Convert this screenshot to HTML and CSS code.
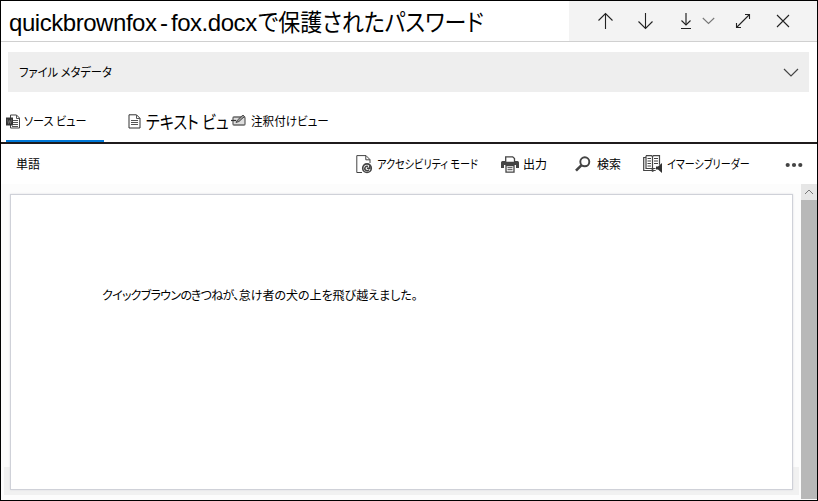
FILE: index.html
```html
<!DOCTYPE html>
<html lang="ja">
<head>
<meta charset="utf-8">
<title>quickbrownfox - fox.docx</title>
<link rel="stylesheet" href="styles.css">
</head>
<body>
<div class="window">
  <header class="header">
    <h1 class="title"><span class="title-latin">quickbrownfox - fox.docx</span><span class="title-ja">で保護されたパスワード</span></h1>
    <div class="actions">
      <svg class="act-up" width="16" height="18" viewBox="0 0 16 18"><path d="M8.500 17V1.500M1.500 8.500l7-7 7 7"/></svg>
      <svg class="act-down" width="16" height="18" viewBox="0 0 16 18"><path d="M8.500 1v15.500M1.500 9.500l7 7 7-7"/></svg>
      <svg class="act-save" width="12" height="18" viewBox="0 0 12 18"><path class="shaft" d="M6 1v12"/><path d="M1.500 8.500L6 13l4.500-4.500M1 16.500h10"/></svg>
      <svg class="act-more" width="13" height="8" viewBox="0 0 13 8"><path d="M.8 1l5.700 5.500L12.200 1"/></svg>
      <svg class="act-expand" width="16" height="16" viewBox="0 0 16 16"><path d="M1.500 14.500l13-13M10 1.500h4.500v4.500M1.500 10v4.500h4.500"/></svg>
      <svg class="act-close" width="14" height="14" viewBox="0 0 14 14"><path d="M1 1l12 12M13 1L1 13"/></svg>
    </div>
  </header>
  <section class="metadata">
    <span class="fit metadata-label">ファイル メタデータ</span>
    <svg width="16" height="10" viewBox="0 0 16 10"><path d="M1 1l7 7 7-7"/></svg>
  </section>
  <nav class="tabs">
    <div class="tab tab-source">
      <svg width="15" height="15" viewBox="0 0 15 15"><path fill="#fff" stroke="#444" d="M4.500 1h6l3 3v10h-9z"/><path fill="none" stroke="#555" d="M10.500 1v3.500h3M6 6.500h6M6 8.500h6M6 10.500h6M6 12.500h6"/><path fill="#333" d="M0 3.500h7v8H0z"/><path fill="none" stroke="#888" stroke-width=".6" d="M1.500 5.500l1 4 1-3 1 3 1-4"/></svg>
      <span class="fit">ソース ビュー</span>
    </div>
    <div class="tab tab-text">
      <svg width="13" height="15" viewBox="0 0 13 15"><path fill="none" stroke="#333" d="M1 .8h7.500l3.500 3.500v9.700H1z"/><path fill="none" stroke="#555" d="M8.500 1v3.500H12M3 6.500h7M3 8.500h7M3 10.500h7"/></svg>
      <span class="fit">テキスト ビュ</span>
    </div>
    <div class="tab tab-annotate">
      <svg width="16" height="13" viewBox="0 0 16 13"><rect x="2" y="2" width="12" height="8" rx="1" fill="#ddd" stroke="#666" stroke-width="1.300"/><path fill="none" stroke="#333" stroke-width="1.200" d="M0 5.500h5"/><path fill="#999" stroke="#333" stroke-width=".8" d="M5 7.500l1.500-2.500L12 0l1.500 1.500-5.500 5z"/></svg>
      <span class="fit">注釈付けビュー</span>
    </div>
  </nav>
  <div class="toolbar">
    <span class="app-name">単語</span>
    <div class="tool tool-access">
      <svg width="17" height="19" viewBox="0 0 17 19"><path fill="none" stroke="#444" d="M6 17.500H.8V.6H10l4 4V8M9.800.6v4.200H14"/><circle cx="11" cy="13.200" r="4.300" fill="#eee" stroke="#444" stroke-width="1.600"/><path fill="none" stroke="#444" stroke-width="1.500" d="M13 14.500a2.200 2.200 0 1 1-1-3M11 13.300h2.800v-3"/></svg>
      <span class="fit">アクセシビリティ モード</span>
    </div>
    <div class="tool tool-print">
      <svg width="18" height="17" viewBox="0 0 18 17"><path fill="#444" d="M1.500 5h15a1.500 1.500 0 0 1 1.500 1.500V12h-3V9H3v3H0V6.500A1.500 1.500 0 0 1 1.500 5z"/><path fill="#fff" stroke="#444" stroke-width="1.300" d="M4.700 6.500V.8h7l1.800 1.800v3.900zM5 9.700h8v6.500H5z"/><path stroke="#444" d="M6.500 11.700h5M6.500 13.700h5"/></svg>
      <span>出力</span>
    </div>
    <div class="tool tool-search">
      <svg width="16" height="16" viewBox="0 0 16 16"><circle cx="9.800" cy="5.800" r="4.500" fill="none" stroke="#444" stroke-width="1.900"/><path stroke="#444" stroke-width="2.600" d="M6.300 9.300L1 14.700"/></svg>
      <span>検索</span>
    </div>
    <div class="tool tool-reader">
      <svg width="20" height="19" viewBox="0 0 20 19"><path fill="none" stroke="#444" stroke-width="1.200" d="M9.500 1.500v14M3 .7h5.500l1 .8 1-.8h6v9M3 .7v12.800h5.500l1 1 1-1h2M3 2.500H.7v13h8l1 .8 1-.8h2"/><path stroke="#444" d="M4.500 3.500H8M4.500 6H8M4.500 8.500H8M4.500 11H8M11 3.500h4M11 6h4M11 8.500h4"/><path fill="#333" d="M13 11.500h2l4-3.500v10l-4-3.500h-2z"/></svg>
      <span class="fit">イマーシブリーダー</span>
    </div>
    <svg class="dots" width="18" height="6" viewBox="0 0 18 6"><g fill="#444"><circle cx="2.700" cy="3" r="2.100"/><circle cx="9" cy="3" r="2.100"/><circle cx="15.300" cy="3" r="2.100"/></g></svg>
  </div>
  <main class="viewer">
    <div class="canvas">
      <article class="page"><p><span class="kana-run">クイックブラウンのきつねが、</span>怠け者の犬の上を飛び越えました。</p></article>
    </div>
    <div class="scrollbar"><div class="scroll-up"><svg width="10" height="6" viewBox="0 0 10 6"><path fill="none" stroke="#777" d="M1 5l4-4 4 4"/></svg></div></div>
  </main>
</div>
</body>
</html>
```
FILE: styles.css
```css
* { box-sizing: border-box; }
body { margin: 0; background: #fff; color: #000; font: 12px/20px "Noto Sans CJK JP", sans-serif; font-feature-settings: "palt"; }
svg { display: block; flex: none; }
.window { width: 818px; height: 501px; border: 1px solid #000; display: flex; flex-direction: column; overflow: hidden; }
.fit { display: block; flex: none; transform-origin: left center; }
.header { flex: none; height: 41px; border-bottom: 1px solid #d0d0d0; display: flex; justify-content: space-between; }
.title { margin: 0; padding: 1px 0 0 8px; display: flex; align-items: baseline; font-weight: 400; font-size: 24px; line-height: 38px; white-space: nowrap; }
.title-latin { font-family: "Liberation Sans", sans-serif; width: 249px; letter-spacing: -.45px; word-spacing: -2.8px; }
.title-ja { transform: scaleX(.915); transform-origin: left; }
.actions { width: 248px; background: #f3f3f3; display: flex; align-items: center; padding-left: 28px; }
.actions svg { fill: none; stroke: #222; stroke-width: 1.1; }
.act-down { margin-left: 24px; }
.act-save { margin-left: 27px; }
.actions .shaft { stroke: #777; stroke-width: 2; }
.actions .act-more { margin-left: 10px; stroke: #777; }
.act-expand { margin-left: 20px; }
.act-close { margin-left: 25px; }
.metadata { flex: none; height: 40px; margin: 10px 8px 0 7px; padding: 0 10px 0 11px; background: #eee; display: flex; align-items: center; justify-content: space-between; }
.metadata svg { fill: none; stroke: #444; stroke-width: 1.2; margin-top: 2px; }
.metadata-label { transform: scaleX(.94); }
.tabs { flex: none; height: 52px; border-bottom: 2px solid #1f1b1c; padding: 8px 0 0 5px; display: flex; white-space: nowrap; }
.tab { display: flex; align-items: center; height: 42px; }
.tab-source { width: 98px; gap: 3px; padding-top: 2px; border-bottom: 2px solid #0078d7; }
.tab-source .fit { transform: scaleX(.925); }
.tab-text { width: 103px; margin-left: 24px; gap: 5px; font-size: 18px; }
.tab-text .fit { transform: scaleX(.84); }
.tab-annotate { gap: 4px; }
.tab-annotate .fit { transform: scaleX(.965); }
.toolbar { flex: none; height: 40px; display: flex; align-items: center; padding-left: 15px; white-space: nowrap; }
.app-name { width: 340px; }
.tool { display: flex; align-items: center; gap: 4px; }
.tool-access { width: 145px; }
.tool-access .fit { transform: scaleX(.845); }
.tool-print { width: 74px; }
.tool-search { width: 68px; gap: 6px; }
.tool-reader { width: 142px; }
.tool-reader .fit { transform: scaleX(.835); }
.dots { margin-top: 2px; }
.viewer { flex: 1; display: flex; background: #fcfcfc; }
.canvas { flex: 1; padding: 10px 8px 0 9px; background: linear-gradient(#f1f1f1, #f1f1f1) 3px 283px / 795px 28px no-repeat; }
.page { height: 296px; background: #fff; border: 1px solid #cfd1d8; box-shadow: 0 0 2px #dcdde2; padding: 90px 0 0 91px; }
.page p { margin: 0; white-space: nowrap; }
.kana-run { letter-spacing: -.7px; }
.scrollbar { width: 16px; height: 315px; background: #b8b8b8; }
.scroll-up { height: 16px; background: #e6e6e6; display: flex; align-items: center; justify-content: center; }
```
